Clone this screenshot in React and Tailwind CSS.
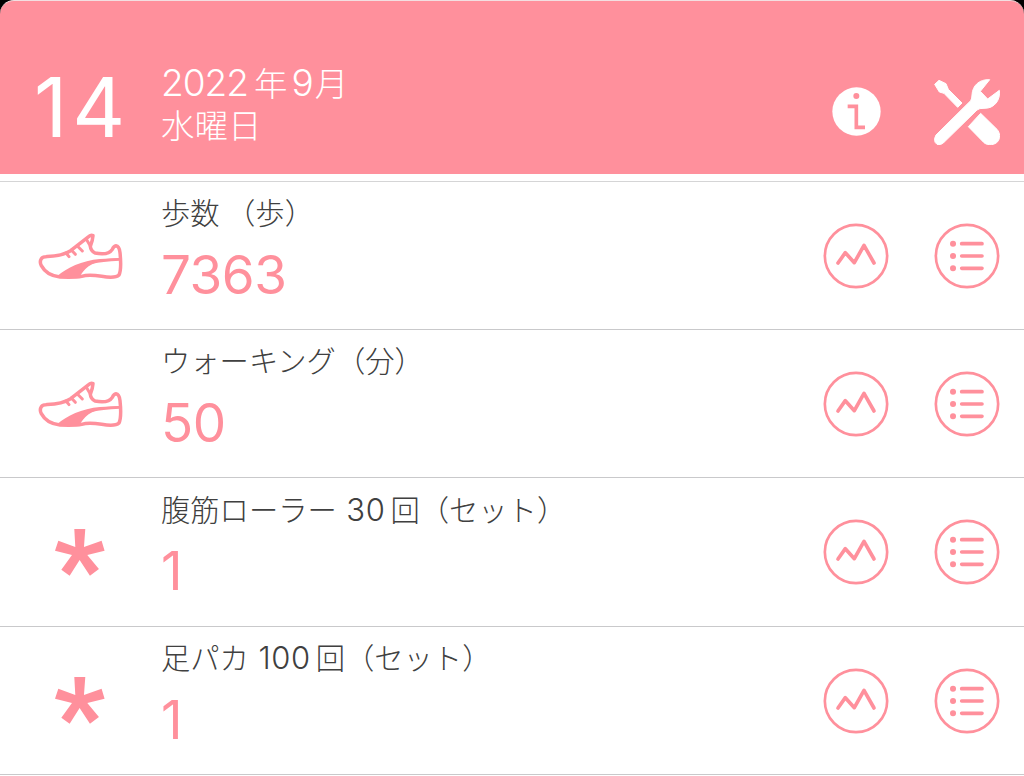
import React from "react";

const JP = "font-['Noto_Sans_CJK_JP',sans-serif]";
const LATIN = "font-['Inter',sans-serif]";

function ShoeIcon() {
  return (
    <svg viewBox="54 127 255 141" className="block h-[47px] w-[85px]" fill="none" stroke="#ff909c" strokeWidth="10.5" strokeLinecap="round" strokeLinejoin="round">
      <path d="M64 204Q58 213 64 225Q80 255 120 259C150 260 170 260 185 257C205 251 225 254 245 257C270 261 290 260 297 253C303 240 302 205 300 186Q298 166 288 165Q281 166 277 176C268 190 245 191 225 187Q212 180 211 167Q218 150 219 135Q213 132 206 138L152 180C125 197 97 197 77 198Q68 198 64 204Z" />
      <path d="M112 256C140 233 185 209 240 205L301 202L301 207L255 210C212 214 190 235 178 261Z" fill="#ff909c" stroke="none" />
      <path d="M175 240C195 216 225 209 300 206" strokeWidth="8" />
      <path d="M138 187L147 198M154 178L166 191M172 166L187 181M199 146L211 166" strokeWidth="9" />
    </svg>
  );
}

function AsteriskIcon() {
  return (
    <svg viewBox="106 147 149 140" className="block h-[46.7px] w-[49.6px]" fill="#ff909c">
      <path d="M164 147H197L193 201L246 182L255 212L203 225L238 267L211 287L180 240L150 287L125 269L157 225L106 212L116 182L167 201Z" />
    </svg>
  );
}

function ChartIcon() {
  return (
    <svg viewBox="40 67 198 198" className="block size-[66px]" fill="none" stroke="#ff909c" strokeLinecap="round" strokeLinejoin="round">
      <circle cx="139" cy="166" r="93.5" strokeWidth="8" />
      <path d="M85 187L107 156L134 186L163 134L193 187" strokeWidth="11" />
    </svg>
  );
}

function ListIcon() {
  return (
    <svg viewBox="374 67 198 198" className="block size-[66px]" fill="none" stroke="#ff909c" strokeLinecap="round">
      <circle cx="473" cy="166" r="93.5" strokeWidth="8" />
      <path d="M457 129H518M457 166H518M457 203H518" strokeWidth="11" />
      <path d="M431 129h.1M431 166h.1M431 203h.1" strokeWidth="18" />
    </svg>
  );
}

function InfoIcon() {
  return (
    <svg viewBox="67 81 147 147" className="block size-[49px]">
      <circle cx="140.5" cy="154.5" r="72.5" fill="#fff" />
      <circle cx="140" cy="108" r="9" fill="#ff909c" />
      <path d="M114 139H140V202H166" fill="none" stroke="#ff909c" strokeWidth="11" />
    </svg>
  );
}

function ToolsIcon() {
  return (
    <svg viewBox="374 56 198 200" className="block h-[66.7px] w-[66px]" fill="#fff" stroke="#fff" strokeWidth="3" strokeLinejoin="round">
      <path d="M380 224L484 121Q488 114 488 104C489 76 510 56 541 58L513 93L535 116L570 90C574 118 556 145 524 144Q510 143 503 149L404 246Q395 256 383 252Q370 243 380 224Z" />
      <path d="M376 72L389 60L410 70L417 87L458 128L445 141L404 99L390 95Z" />
      <path d="M514 159L563 207C573 218 573 234 565 244C556 254 536 257 524 247L477 199Z" />
    </svg>
  );
}

const rows = [
  { icon: "shoe", label: "歩数 （歩）", value: "7363" },
  { icon: "shoe", label: "ウォーキング（分）", value: "50" },
  { icon: "star", label: "腹筋ローラー ", count: "30", unit: "回（セット）", value: "1" },
  { icon: "star", label: "足パカ ", count: "100", unit: "回（セット）", value: "1" },
];

function Row({ icon, label, count, unit, value }) {
  return (
    <li className="flex h-[148.4px] border-b border-[#c9c9cb]">
      <div className="flex w-[161px] shrink-0 justify-center pr-px pt-[3px]">
        {icon === "shoe" ? <div className="pt-[48px]"><ShoeIcon /></div> : <div className="pt-[47.5px]"><AsteriskIcon /></div>}
      </div>
      <div className="flex flex-1 flex-col whitespace-pre">
        <div className={`${JP} mt-[7.5px] h-[44px] text-[29.3px] font-light leading-[44px] text-[#404040]`}>
          {label}
          {count && <span className={`${LATIN} ml-[3px] mr-[5px] text-[31px] font-light tracking-[0.6px]`}>{count}</span>}
          {unit}
        </div>
        <div className={`${LATIN} mt-[11.5px] h-[60px] text-[53px] font-normal leading-[60px] tracking-[-0.5px] text-[#ff909c]`}>{value}</div>
      </div>
      <div className="flex gap-[45.3px] pr-[23.6px] pt-[41px]">
        <ChartIcon />
        <ListIcon />
      </div>
    </li>
  );
}

export default function App() {
  return (
    <div className="h-[776px] w-[1024px] overflow-hidden bg-white">
      <div className="bg-black">
        <header className="flex h-[174px] rounded-t-[14px] border-t border-[#f3dfe1] bg-[#ff909c] text-white">
          <div className={`${LATIN} w-[161px] pl-[34px] pt-[57px] text-[82px] font-normal leading-[100px] tracking-[5px]`}>14</div>
          <div className={`${JP} flex-1 pt-[59px] text-[33.5px] font-light`}>
            <div className="h-[43px] whitespace-nowrap leading-[43px]">
              <span className={`${LATIN} mr-[6px] text-[37px] font-light leading-none tracking-[-1px]`}>2022</span>年
              <span className={`${LATIN} ml-[4px] mr-px text-[37px] font-light leading-none`}>9</span>月
            </div>
            <div className="h-[42px] leading-[42px]">水曜日</div>
          </div>
          <div className="flex pr-[23.6px]">
            <div className="pt-[86px]"><InfoIcon /></div>
            <div className="ml-[53.4px] pt-[77.5px]"><ToolsIcon /></div>
          </div>
        </header>
      </div>
      <div className="h-[7.6px] border-b border-[#d5d5d6]" />
      <ul>
        {rows.map((r, i) => <Row key={i} {...r} />)}
      </ul>
    </div>
  );
}
